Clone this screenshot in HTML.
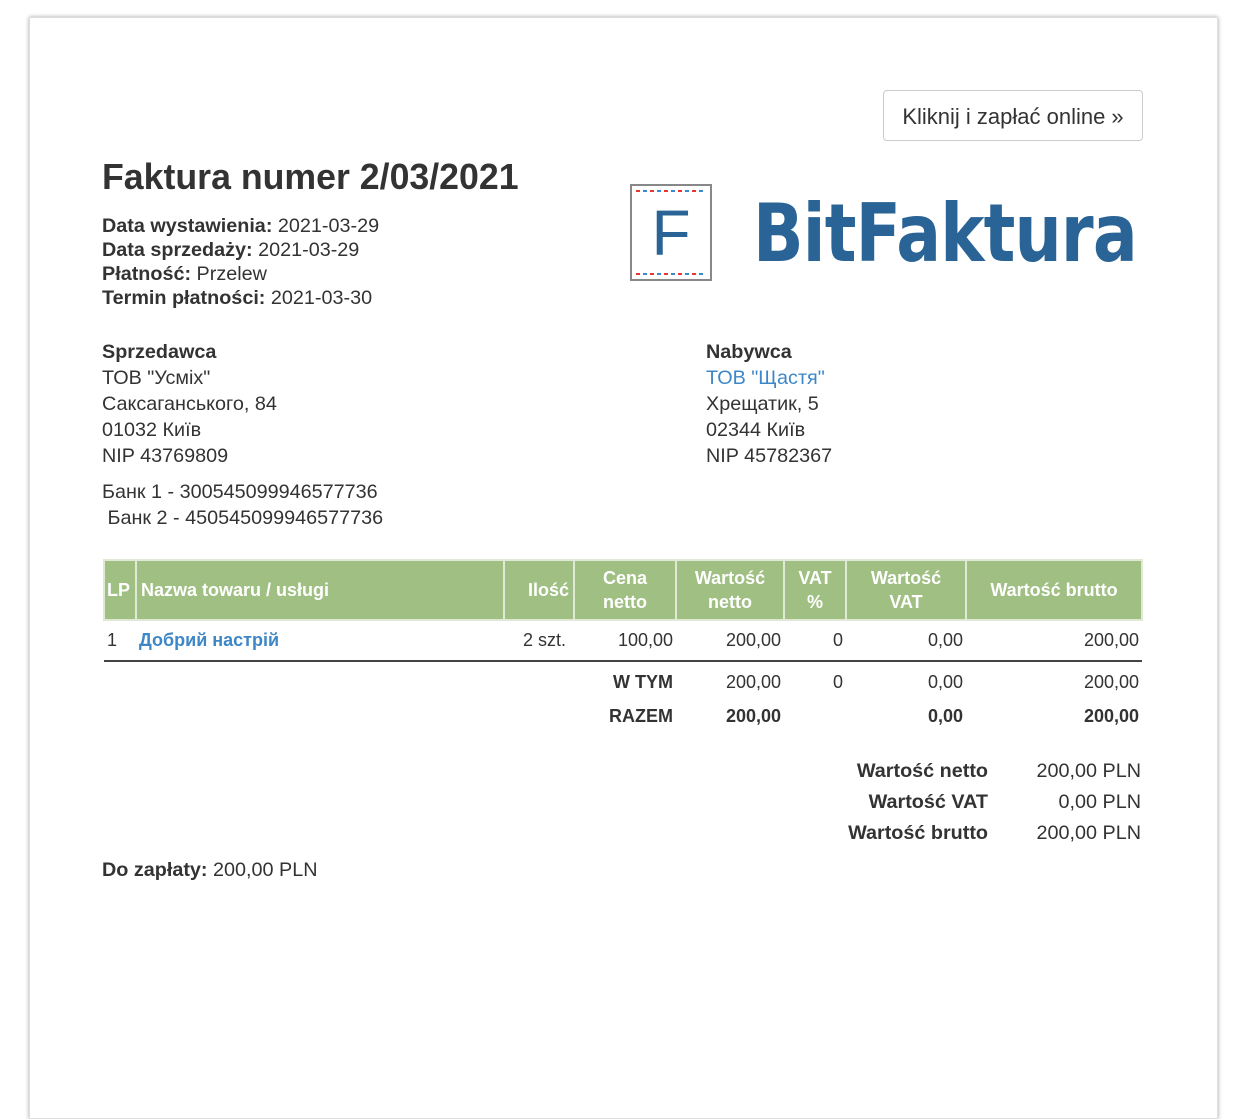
<!DOCTYPE html>
<html><head><meta charset="utf-8"><style>
body{margin:0;background:#fff;font-family:"Liberation Sans",sans-serif;color:#333;font-size:19.8px;overflow:hidden;}
.card{position:absolute;left:29px;top:17px;width:1187px;height:1100px;background:#fff;box-shadow:0 0 4px rgba(0,0,0,.35);border:1px solid #ddd;}
.a{position:absolute;white-space:nowrap;}
b{font-weight:bold}
.btn{position:absolute;left:883px;top:90px;width:260px;height:51px;border:1px solid #ccc;border-radius:4px;box-sizing:border-box;font-size:22px;line-height:51px;text-align:center;color:#333;}
table{position:absolute;left:103px;top:559px;width:1040px;border-collapse:collapse;font-size:18px;}
th{background:#a0bf83;color:#fff;font-weight:bold;height:58px;border:2px solid #dfe9d6;padding:0 4px;line-height:24px;}
td{padding:0 3px;}
.blue{color:#3d87c7}
</style></head><body>
<div class="card"></div>
<div class="btn">Kliknij i zapłać online »</div>
<div class="a" style="left:102px;top:157px;font-size:35.7px;font-weight:bold;">Faktura numer 2/03/2021</div>
<div class="a" style="left:102px;top:214px;line-height:24px;"><b>Data wystawienia:</b> 2021-03-29<br><b>Data sprzedaży:</b> 2021-03-29<br><b>Płatność:</b> Przelew<br><b>Termin płatności:</b> 2021-03-30</div>
<div class="a" style="left:630px;top:184px;width:82px;height:97px;border:2px solid #888;box-sizing:border-box;">
<div style="position:absolute;left:4px;right:4px;top:4px;height:2px;background:repeating-linear-gradient(90deg,#e33 0 4px,transparent 4px 7px,#3a8ad0 7px 11px,transparent 11px 14px)"></div>
<div style="position:absolute;left:4px;right:4px;bottom:4px;height:2px;background:repeating-linear-gradient(90deg,#e33 0 4px,transparent 4px 7px,#3a8ad0 7px 11px,transparent 11px 14px)"></div>
<div style="position:absolute;left:0;right:0;top:14px;text-align:center;font-size:64px;color:#2a6496;line-height:66px;">F</div></div>
<div class="a" style="left:753px;top:186px;font-size:80px;font-weight:bold;color:#2a6496;letter-spacing:-1px;line-height:96px;font-family:'DejaVu Sans',sans-serif;transform:scaleX(.83);transform-origin:left;">BitFaktura</div>
<div class="a" style="left:102px;top:339px;line-height:26px;"><b>Sprzedawca</b><br>ТОВ "Усміх"<br>Саксаганського, 84<br>01032 Київ<br>NIP 43769809</div>
<div class="a" style="left:102px;top:479px;line-height:26px;">Банк 1 - 300545099946577736<br>&nbsp;Банк 2 - 450545099946577736</div>
<div class="a" style="left:706px;top:339px;line-height:26px;"><b>Nabywca</b><br><span class="blue">ТОВ "Щастя"</span><br>Хрещатик, 5<br>02344 Київ<br>NIP 45782367</div>
<table>
<tr><th style="width:26px;text-align:left;padding:0 2px">LP</th><th style="text-align:left;width:358px">Nazwa towaru / usługi</th><th style="text-align:right;width:60px">Ilość</th><th style="width:92px">Cena<br>netto</th><th style="width:98px">Wartość<br>netto</th><th style="width:52px">VAT<br>%</th><th style="width:110px">Wartość<br>VAT</th><th>Wartość brutto</th></tr>
<tr style="height:41px;border-bottom:2px solid #444"><td>1</td><td class="blue" style="font-weight:bold">Добрий настрій</td><td style="text-align:right;padding-right:8px">2 szt.</td><td style="text-align:right">100,00</td><td style="text-align:right">200,00</td><td style="text-align:right;padding-right:3px">0</td><td style="text-align:right">0,00</td><td style="text-align:right">200,00</td></tr>
<tr style="height:42px"><td></td><td></td><td></td><td style="text-align:right"><b>W TYM</b></td><td style="text-align:right">200,00</td><td style="text-align:right;padding-right:3px">0</td><td style="text-align:right">0,00</td><td style="text-align:right">200,00</td></tr>
<tr style="height:26px"><td></td><td></td><td></td><td style="text-align:right"><b>RAZEM</b></td><td style="text-align:right"><b>200,00</b></td><td></td><td style="text-align:right"><b>0,00</b></td><td style="text-align:right"><b>200,00</b></td></tr>
</table>
<div class="a" style="right:262px;top:756px;line-height:31px;text-align:right;font-weight:bold;">Wartość netto<br>Wartość VAT<br>Wartość brutto</div>
<div class="a" style="right:109px;top:756px;line-height:31px;text-align:right;">200,00 PLN<br>0,00 PLN<br>200,00 PLN</div>
<div class="a" style="left:102px;top:859px;"><b>Do zapłaty:</b> 200,00 PLN</div>
</body></html>
